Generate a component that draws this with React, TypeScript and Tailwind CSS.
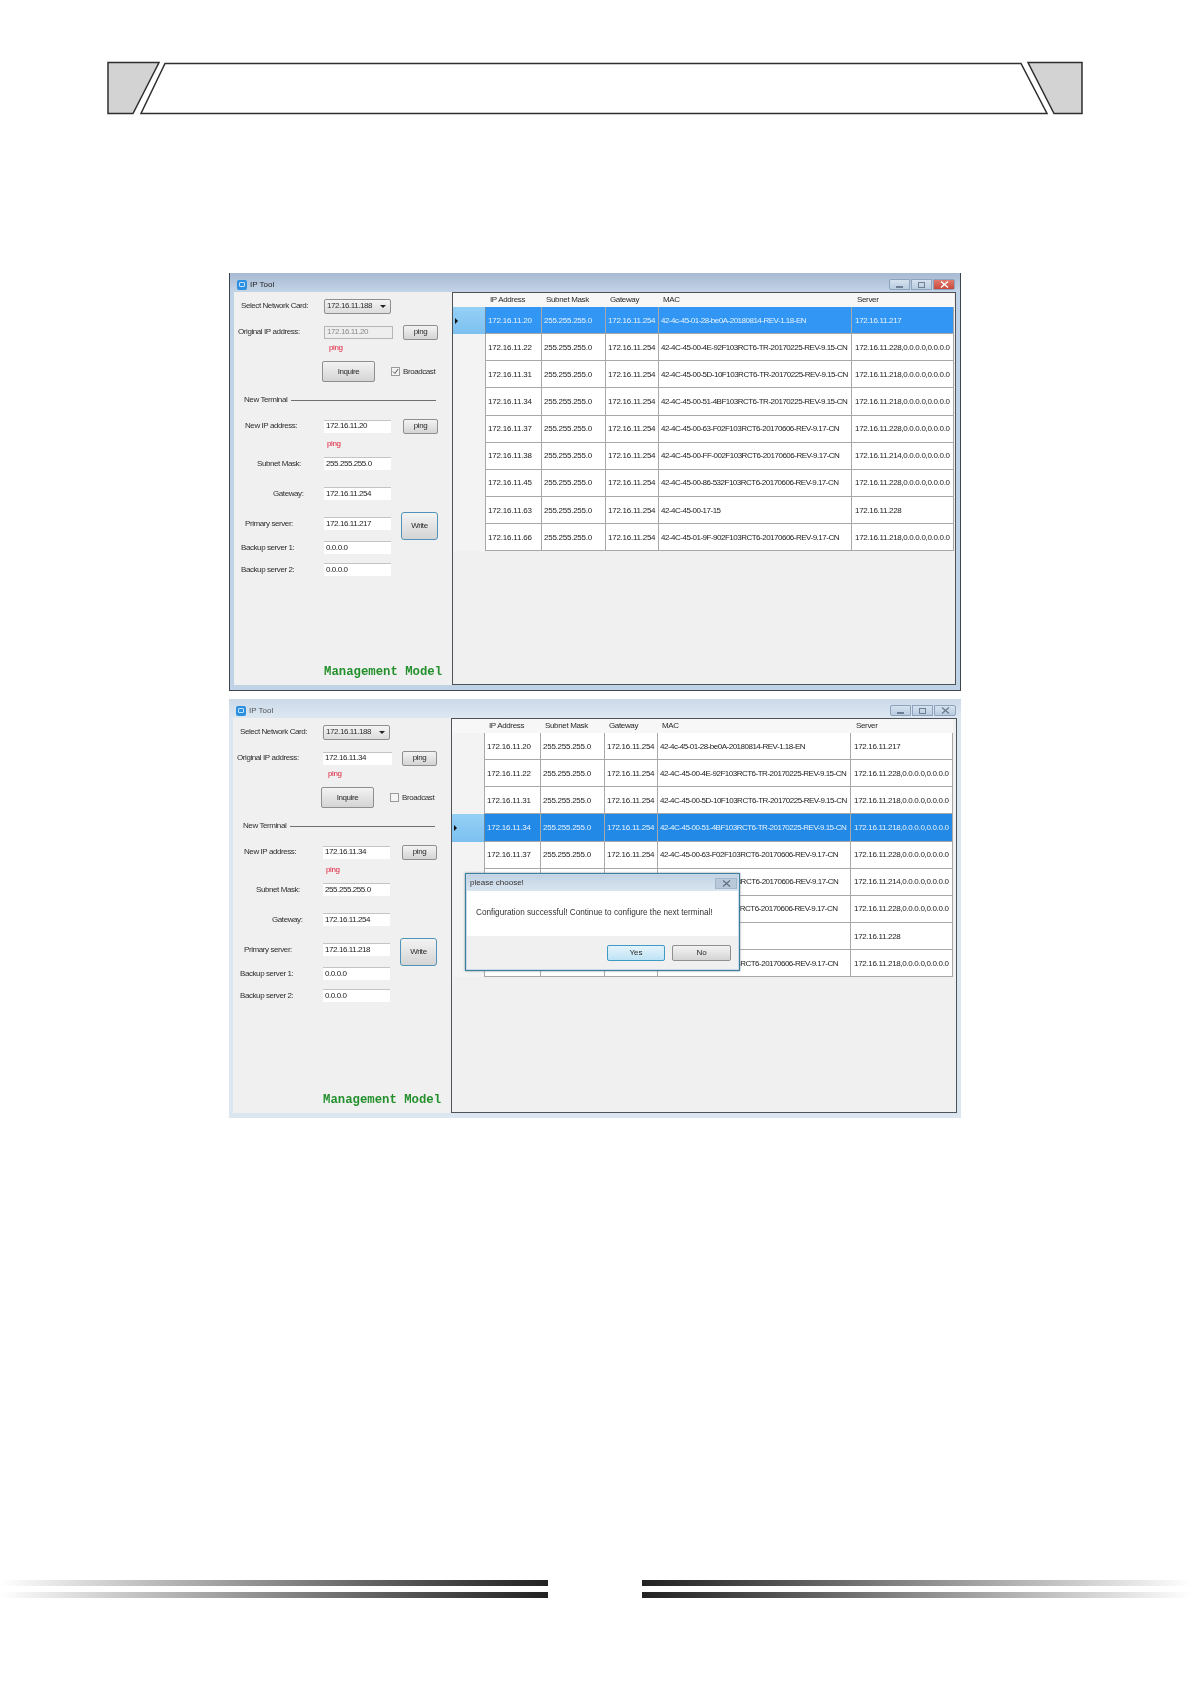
const MAIN_FONT = "font-['Liberation_Sans',Arial,sans-serif]";

const rows = [
  ["172.16.11.20", "42-4c-45-01-28-be0A-20180814-REV-1.18-EN", "172.16.11.217"],
  ["172.16.11.22", "42-4C-45-00-4E-92F103RCT6-TR-20170225-REV-9.15-CN", "172.16.11.228,0.0.0.0,0.0.0.0"],
  ["172.16.11.31", "42-4C-45-00-5D-10F103RCT6-TR-20170225-REV-9.15-CN", "172.16.11.218,0.0.0.0,0.0.0.0"],
  ["172.16.11.34", "42-4C-45-00-51-4BF103RCT6-TR-20170225-REV-9.15-CN", "172.16.11.218,0.0.0.0,0.0.0.0"],
  ["172.16.11.37", "42-4C-45-00-63-F02F103RCT6-20170606-REV-9.17-CN", "172.16.11.228,0.0.0.0,0.0.0.0"],
  ["172.16.11.38", "42-4C-45-00-FF-002F103RCT6-20170606-REV-9.17-CN", "172.16.11.214,0.0.0.0,0.0.0.0"],
  ["172.16.11.45", "42-4C-45-00-86-532F103RCT6-20170606-REV-9.17-CN", "172.16.11.228,0.0.0.0,0.0.0.0"],
  ["172.16.11.63", "42-4C-45-00-17-15", "172.16.11.228"],
  ["172.16.11.66", "42-4C-45-01-9F-902F103RCT6-20170606-REV-9.17-CN", "172.16.11.218,0.0.0.0,0.0.0.0"],
];

const COLS = "grid grid-cols-[33px_56px_64px_53px_193px_102px] w-[501px]";

function Button({ className, children }: { className: string; children: React.ReactNode }) {
  return (
    <div className={"flex items-center justify-center rounded-[2px] border border-[#8f8f8f] bg-linear-to-b from-[#f3f3f3] to-[#d4d4d4] text-[#2a2a2a] " + className}>
      {children}
    </div>
  );
}

function Field({ value, muted, className = "w-[67px]" }: { value: string; muted?: boolean; className?: string }) {
  return (
    <div
      className={
        "h-[13px] flex items-center pl-[2px] pb-[1px] " +
        (muted ? "border border-[#b5b5b5] bg-[#eeeeee] text-[#8a8a8a] " : "border-t border-[#c4c4c4] bg-white text-[#222] ") +
        className
      }
    >
      {value}
    </div>
  );
}

function WindowControls({ active }: { active: boolean }) {
  const box = "h-[11px] flex items-center justify-center border border-[#8ea3bb] ";
  return (
    <div className="flex gap-[1px] mr-[1px]">
      <div className={box + "w-[21px] rounded-l-[2px] bg-linear-to-b from-[#d5e2ef] to-[#b9cce0]"}>
        <div className="mt-[4px] h-[2px] w-[7px] border border-[#6d7f94]" />
      </div>
      <div className={box + "w-[21px] bg-linear-to-b from-[#d5e2ef] to-[#b9cce0]"}>
        <div className="h-[6px] w-[7px] border border-[#6d7f94]" />
      </div>
      <div className={box + "w-[22px] rounded-r-[2px] bg-linear-to-b " + (active ? "from-[#e0796c] to-[#c9483c]" : "from-[#d5e2ef] to-[#b9cce0]")}>
        <svg width="9" height="7" viewBox="0 0 9 7">
          <path d="M1 0.5 L8 6.5 M8 0.5 L1 6.5" stroke={active ? "#ffffff" : "#6d7f94"} strokeWidth="1.4" />
        </svg>
      </div>
    </div>
  );
}

function LeftPanel(p: { origIp: string; newIp: string; server: string; broadcast: boolean; muted: boolean }) {
  return (
    <div className="w-[218px] shrink-0 flex flex-col pt-[6px] pb-[6px] bg-[#f0f0f0] text-[#2e2e2e] tracking-[-0.42px]">
      <div className="h-[16px] flex items-center">
        <div className="w-[90px] pl-[7px]">Select Network Card:</div>
        <div className="h-[15px] w-[67px] flex items-center justify-between px-[2px] rounded-[2px] border border-[#8f8f8f] bg-linear-to-b from-[#f4f4f4] to-[#dcdcdc]">
          172.16.11.188
          <div className="mr-[2px] border-x-[3px] border-t-[3px] border-x-transparent border-t-[#222]" />
        </div>
      </div>

      <div className="h-[16px] mt-[10px] flex items-center">
        <div className="w-[90px] pl-[4px]">Original IP address:</div>
        <Field value={p.origIp} muted={p.muted} className="w-[69px]" />
        <Button className="ml-[10px] w-[35px] h-[15px]">ping</Button>
      </div>
      <div className="h-[10px] mt-[3px] pl-[95px] flex items-center text-[#e0213a]">ping</div>

      <div className="h-[21px] mt-[8px] flex items-center">
        <Button className="ml-[88px] w-[53px] h-[21px]">Inquire</Button>
        <div className="ml-[16px] h-[9px] w-[9px] flex items-center justify-center border border-[#9a9a9a] bg-[#f4f4f4]">
          {p.broadcast && (
            <svg width="7" height="7" viewBox="0 0 7 7">
              <path d="M1 3.5 L3 5.5 L6 1" stroke="#555" strokeWidth="1" fill="none" />
            </svg>
          )}
        </div>
        <div className="ml-[3px]">Broadcast</div>
      </div>

      <div className="h-[10px] mt-[13px] flex items-center pl-[10px]">
        New Terminal
        <div className="ml-[4px] w-[145px] h-px bg-[#707070]" />
      </div>

      <div className="h-[16px] mt-[13px] flex items-center">
        <div className="w-[90px] pl-[11px]">New IP address:</div>
        <Field value={p.newIp} />
        <Button className="ml-[12px] w-[35px] h-[15px]">ping</Button>
      </div>
      <div className="h-[10px] mt-[5px] pl-[93px] flex items-center text-[#e0213a]">ping</div>

      <div className="h-[13px] mt-[8px] flex items-center">
        <div className="w-[90px] pl-[23px]">Subnet Mask:</div>
        <Field value="255.255.255.0" />
      </div>
      <div className="h-[13px] mt-[17px] flex items-center">
        <div className="w-[90px] pl-[39px]">Gateway:</div>
        <Field value="172.16.11.254" />
      </div>
      <div className="h-[13px] mt-[17px] flex items-center">
        <div className="w-[90px] pl-[11px]">Primary server:</div>
        <Field value={p.server} />
        <Button className="ml-[10px] mt-[5px] w-[37px] h-[28px] !border-[#4f93b8] !rounded-[3px]">Write</Button>
      </div>
      <div className="h-[13px] mt-[11px] flex items-center">
        <div className="w-[90px] pl-[7px]">Backup server 1:</div>
        <Field value="0.0.0.0" />
      </div>
      <div className="h-[13px] mt-[9px] flex items-center">
        <div className="w-[90px] pl-[7px]">Backup server 2:</div>
        <Field value="0.0.0.0" />
      </div>

      <div className="mt-auto pl-[90px] font-['Liberation_Mono',monospace] font-bold text-[12.3px] leading-[14px] tracking-normal text-[#23902c] whitespace-nowrap">
        Management Model
      </div>
    </div>
  );
}

function DataTable({ selected, selectedColor }: { selected: number; selectedColor: string }) {
  return (
    <div className="flex-1 border border-[#4d5358] bg-[#f0f0f0]">
      <div className={COLS + " h-[14px] text-[#2a2a2a] bg-[#f7f7f7] tracking-[-0.35px]"}>
        <div />
        <div className="pl-[4px] flex items-center">IP Address</div>
        <div className="pl-[4px] flex items-center">Subnet Mask</div>
        <div className="pl-[4px] flex items-center">Gateway</div>
        <div className="pl-[4px] flex items-center">MAC</div>
        <div className="pl-[5px] flex items-center">Server</div>
      </div>
      {rows.map((r, i) => {
        const isSel = i === selected;
        const cell = "flex items-center pt-[1px] whitespace-nowrap overflow-hidden border-r border-b border-[#a8a8a8] " + (isSel ? "" : "bg-white");
        return (
          <div key={r[0]} className={COLS + " h-[27.15px] " + (isSel ? selectedColor + " text-[#e6f3ff]" : "text-[#222]")}>
            <div className={"flex items-center pl-[2px] " + (isSel ? "bg-linear-to-b from-[#95d0f6] to-[#7cc0f0] border-r border-[#6c8ba3]" : "bg-[#f3f3f3] border-r border-[#a8a8a8]")}>
              {isSel && <div className="border-y-[3px] border-l-[3px] border-y-transparent border-l-[#111]" />}
            </div>
            <div className={cell + " pl-[2px] tracking-[-0.2px]"}>{r[0]}</div>
            <div className={cell + " pl-[2px] tracking-[-0.25px]"}>255.255.255.0</div>
            <div className={cell + " pl-[2px] tracking-[-0.25px]"}>172.16.11.254</div>
            <div className={cell + " pl-[2px] tracking-[-0.5px]"}>{r[1]}</div>
            <div className={cell + " pl-[3px] tracking-[-0.32px]"}>{r[2]}</div>
          </div>
        );
      })}
    </div>
  );
}

function IpTool(p: {
  active: boolean;
  selected: number;
  selectedColor: string;
  origIp: string;
  newIp: string;
  server: string;
  broadcast: boolean;
  className: string;
  children?: React.ReactNode;
}) {
  return (
    <div className={"relative w-[732px] flex flex-col text-[8px] leading-none blur-[0.3px] " + p.className}>
      <div className={"h-[19px] shrink-0 flex items-center justify-between pt-[4px] pl-[7px] pr-[4px] bg-linear-to-b " + (p.active ? "from-[#a7bad3] to-[#c4d4e7]" : "from-[#cbd9e8] to-[#dde8f2]")}>
        <div className={"flex items-center gap-[3px] text-[8px] " + (p.active ? "text-[#222]" : "text-[#555]")}>
          <div className="h-[10px] w-[10px] rounded-[2px] bg-[#2d8fe0] flex items-center justify-center">
            <div className="h-[5px] w-[6px] rounded-[1px] border border-[#bfe2fb]" />
          </div>
          IP Tool
        </div>
        <WindowControls active={p.active} />
      </div>
      <div className={"flex-1 flex px-[4px] pb-[5px] " + (p.active ? "bg-[#c0d3e6]" : "bg-[#dbe6f0]")}>
        <LeftPanel origIp={p.origIp} newIp={p.newIp} server={p.server} broadcast={p.broadcast} muted={p.active} />
        <DataTable selected={p.selected} selectedColor={p.selectedColor} />
      </div>
      {p.children}
    </div>
  );
}

function HeaderShape() {
  return (
    <svg width="976" height="54" viewBox="0 0 976 54">
      <polygon points="1,1.5 52,1.5 26,52.5 1,52.5" fill="#d3d3d3" stroke="#2f2f2f" strokeWidth="1.5" />
      <polygon points="58,2.5 914,2.5 940,52.5 34,52.5" fill="#ffffff" stroke="#2f2f2f" strokeWidth="1.5" />
      <polygon points="921,1.5 975,1.5 975,52.5 947,52.5" fill="#d3d3d3" stroke="#2f2f2f" strokeWidth="1.5" />
    </svg>
  );
}

function FooterBars({ right }: { right?: boolean }) {
  const bar = "h-[6px] " + (right ? "w-[549px] bg-linear-to-l from-white via-[#8a8a8a] to-[#222]" : "w-[548px] bg-linear-to-r from-white via-[#8a8a8a] to-[#222]");
  return (
    <div className="flex flex-col gap-[6px]">
      <div className={bar} />
      <div className={bar} />
    </div>
  );
}

export default function App() {
  return (
    <div className={"w-[1191px] h-[1684px] bg-white flex flex-col items-start " + MAIN_FONT}>
      <div className="mt-[61px] ml-[107px] flex">
        <HeaderShape />
      </div>

      <IpTool
        active
        selected={0}
        selectedColor="bg-[#3296f5]"
        origIp="172.16.11.20"
        newIp="172.16.11.20"
        server="172.16.11.217"
        broadcast
        className="mt-[158px] ml-[229px] h-[418px] border-x border-b border-[#3d4650]"
      />

      <IpTool
        active={false}
        selected={3}
        selectedColor="bg-[#2289e6]"
        origIp="172.16.11.34"
        newIp="172.16.11.34"
        server="172.16.11.218"
        broadcast={false}
        className="mt-[8px] ml-[229px] h-[419px]"
      >
        <div className="absolute left-[236px] top-[174px] w-[275px] h-[98px] flex flex-col border border-[#3f7f9e] bg-[#c9d9e8] p-[1px] shadow-[0_0_2px_#7a8a99]">
          <div className="h-[16px] shrink-0 flex items-center justify-between pl-[3px] pr-[1px] bg-linear-to-b from-[#c3d3e4] to-[#d9e5f0] text-[8px] text-[#333]">
            please choose!
            <div className="w-[22px] h-[11px] flex items-center justify-center bg-[#b9c9da] border border-[#a3b5c8]">
              <svg width="9" height="7" viewBox="0 0 9 7">
                <path d="M1 0.5 L8 6.5 M8 0.5 L1 6.5" stroke="#5d6f84" strokeWidth="1.2" />
              </svg>
            </div>
          </div>
          <div className="h-[45px] shrink-0 flex items-center pl-[9px] bg-white text-[8.2px] text-[#333]">
            Configuration successful! Continue to configure the next terminal!
          </div>
          <div className="flex-1 flex items-start justify-end gap-[7px] pt-[9px] pr-[7px] bg-[#f0f0f0] text-[8px]">
            <Button className="w-[58px] h-[16px] !border-[#3f9bc4] !from-[#e4f4fb] !to-[#bfe3f5]">Yes</Button>
            <Button className="w-[59px] h-[16px]">No</Button>
          </div>
        </div>
      </IpTool>

      <div className="mt-auto mb-[86px] w-full flex justify-between">
        <FooterBars />
        <FooterBars right />
      </div>
    </div>
  );
}
